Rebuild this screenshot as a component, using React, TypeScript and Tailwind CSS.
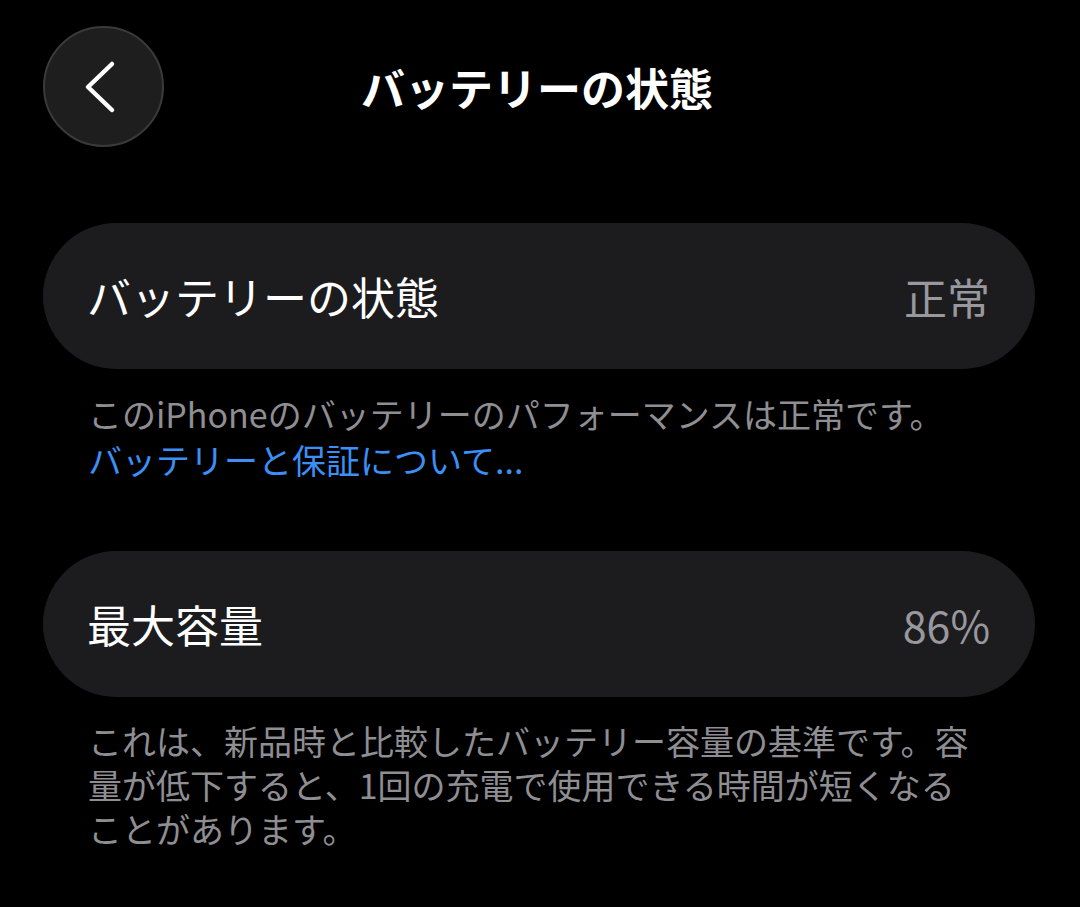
const font = { fontFamily: '"Noto Sans CJK JP", "Noto Sans", sans-serif' };

const Row = ({ label, value }: { label: string; value: string }) => (
  <div className="h-[146px] rounded-full bg-[#1c1c1e] flex items-center justify-between pl-[44px] pr-[45px]">
    <span className="text-[44px] text-white leading-none">{label}</span>
    <span className="text-[43px] text-[#98989e] leading-none">{value}</span>
  </div>
);

export default function App() {
  return (
    <div className="min-h-[907px] w-[1080px] bg-black pl-[43px] pr-[45px] pt-[26px]" style={font}>
      <header className="grid grid-cols-[121px_1fr_121px] items-center">
        <button className="w-[121px] h-[121px] rounded-full bg-[#1e1e1f] border-2 border-[#3a3a3c] flex items-center justify-center">
          <svg width="32" height="54" viewBox="0 0 32 54" fill="none" className="mr-[7px]">
            <path d="M28 4 L4 27 L28 50" stroke="white" strokeWidth="4.5" strokeLinecap="round" strokeLinejoin="round" />
          </svg>
        </button>
        <h1 className="text-center text-[44px] font-bold text-white leading-none pr-[4px]">バッテリーの状態</h1>
        <div />
      </header>

      <section className="mt-[76px]">
        <Row label="バッテリーの状態" value="正常" />
        <div className="pl-[45px] mt-[22px] text-[34px] leading-[46px]">
          <p className="text-[#8e8e93]">このiPhoneのバッテリーのパフォーマンスは正常です。</p>
          <a className="text-[#3b8ff5] block">バッテリーと保証について...</a>
        </div>
      </section>

      <section className="mt-[68px]">
        <Row label="最大容量" value="86%" />
        <p className="pl-[45px] mt-[22px] text-[34px] leading-[44px] text-[#8e8e93]">
          これは、新品時と比較したバッテリー容量の基準です。容
          <br />
          量が低下すると、1回の充電で使用できる時間が短くなる
          <br />
          ことがあります。
        </p>
      </section>
    </div>
  );
}
